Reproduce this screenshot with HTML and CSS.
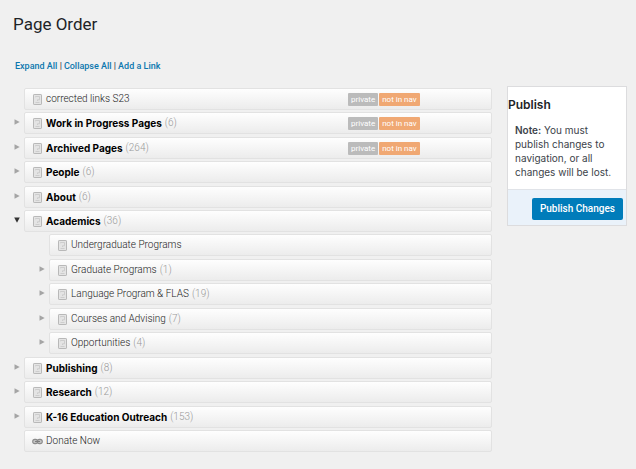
FILE: index.html
```html
<!DOCTYPE html>
<html lang="en">

<head>
    <meta charset="UTF-8">
    <meta name="viewport" content="width=device-width, initial-scale=1.0">
    <title>Page Order</title>
    <link rel="stylesheet" href="styles.css">
</head>

<body>
    <!-- shared icons -->
    <svg class="sprite" aria-hidden="true">
        <symbol id="icon-page" viewBox="0 0 9 11">
            <rect x="0.5" y="0.5" width="8" height="10" rx="0.6" fill="#e4e4e4" stroke="#b8b8b8" />
            <path d="M2.5 3.3V2.5h4v3.3H4.5v1.2M2.5 8.5h4" fill="none" stroke="#cacaca" stroke-width="0.9" />
        </symbol>
        <symbol id="icon-link" viewBox="0 0 11 6">
            <rect x="0.7" y="0.9" width="5" height="4.2" rx="2.1" fill="#c4c4c4" stroke="#8c8c8c" stroke-width="1.1" />
            <rect x="5.3" y="0.9" width="5" height="4.2" rx="2.1" fill="#c4c4c4" stroke="#8c8c8c" stroke-width="1.1" />
            <path d="M3 3h5" stroke="#7c7c7c" stroke-width="1.1" />
        </symbol>
        <symbol id="icon-closed" viewBox="0 0 6 6">
            <path d="M0.5 0.3L5.7 3L0.5 5.7z" fill="#a5a5a5" />
        </symbol>
        <symbol id="icon-open" viewBox="0 0 6 6">
            <path d="M0.2 0.5H5.8L3 5.8z" fill="#333" />
        </symbol>
    </svg>

    <main class="page">
        <h1>Page Order</h1>

        <nav class="links">
            <a href="#">Expand All</a> |<a href="#">Collapse All</a> |<a href="#">Add a Link</a>
        </nav>

        <div class="columns">
            <ul class="tree">
                <li>
                    <div class="row">
                        <span class="name"><svg class="icon"><use href="#icon-page" /></svg>corrected links S23</span>
                        <span class="badges"><span class="badge private">private</span><span class="badge hidden-nav">not in nav</span></span>
                    </div>
                </li>
                <li>
                    <button class="toggle" aria-label="Expand Work in Progress Pages"><svg><use href="#icon-closed" /></svg></button>
                    <div class="row">
                        <span class="name"><svg class="icon"><use href="#icon-page" /></svg><strong>Work in Progress Pages</strong><span class="count">(6)</span></span>
                        <span class="badges"><span class="badge private">private</span><span class="badge hidden-nav">not in nav</span></span>
                    </div>
                </li>
                <li>
                    <button class="toggle" aria-label="Expand Archived Pages"><svg><use href="#icon-closed" /></svg></button>
                    <div class="row">
                        <span class="name"><svg class="icon"><use href="#icon-page" /></svg><strong>Archived Pages</strong><span class="count">(264)</span></span>
                        <span class="badges"><span class="badge private">private</span><span class="badge hidden-nav">not in nav</span></span>
                    </div>
                </li>
                <li>
                    <button class="toggle" aria-label="Expand People"><svg><use href="#icon-closed" /></svg></button>
                    <div class="row">
                        <span class="name"><svg class="icon"><use href="#icon-page" /></svg><strong>People</strong><span class="count">(6)</span></span>
                    </div>
                </li>
                <li>
                    <button class="toggle" aria-label="Expand About"><svg><use href="#icon-closed" /></svg></button>
                    <div class="row">
                        <span class="name"><svg class="icon"><use href="#icon-page" /></svg><strong>About</strong><span class="count">(6)</span></span>
                    </div>
                </li>
                <li>
                    <button class="toggle" aria-label="Collapse Academics" aria-expanded="true"><svg><use href="#icon-open" /></svg></button>
                    <div class="row">
                        <span class="name"><svg class="icon"><use href="#icon-page" /></svg><strong>Academics</strong><span class="count">(36)</span></span>
                    </div>
                    <ul class="subtree">
                        <li>
                            <div class="row">
                                <span class="name"><svg class="icon"><use href="#icon-page" /></svg>Undergraduate Programs</span>
                            </div>
                        </li>
                        <li>
                            <button class="toggle" aria-label="Expand Graduate Programs"><svg><use href="#icon-closed" /></svg></button>
                            <div class="row">
                                <span class="name"><svg class="icon"><use href="#icon-page" /></svg>Graduate Programs<span class="count">(1)</span></span>
                            </div>
                        </li>
                        <li>
                            <button class="toggle" aria-label="Expand Language Program &amp; FLAS"><svg><use href="#icon-closed" /></svg></button>
                            <div class="row">
                                <span class="name"><svg class="icon"><use href="#icon-page" /></svg>Language Program &amp; FLAS<span class="count">(19)</span></span>
                            </div>
                        </li>
                        <li>
                            <button class="toggle" aria-label="Expand Courses and Advising"><svg><use href="#icon-closed" /></svg></button>
                            <div class="row">
                                <span class="name"><svg class="icon"><use href="#icon-page" /></svg>Courses and Advising<span class="count">(7)</span></span>
                            </div>
                        </li>
                        <li>
                            <button class="toggle" aria-label="Expand Opportunities"><svg><use href="#icon-closed" /></svg></button>
                            <div class="row">
                                <span class="name"><svg class="icon"><use href="#icon-page" /></svg>Opportunities<span class="count">(4)</span></span>
                            </div>
                        </li>
                    </ul>
                </li>
                <li>
                    <button class="toggle" aria-label="Expand Publishing"><svg><use href="#icon-closed" /></svg></button>
                    <div class="row">
                        <span class="name"><svg class="icon"><use href="#icon-page" /></svg><strong>Publishing</strong><span class="count">(8)</span></span>
                    </div>
                </li>
                <li>
                    <button class="toggle" aria-label="Expand Research"><svg><use href="#icon-closed" /></svg></button>
                    <div class="row">
                        <span class="name"><svg class="icon"><use href="#icon-page" /></svg><strong>Research</strong><span class="count">(12)</span></span>
                    </div>
                </li>
                <li>
                    <button class="toggle" aria-label="Expand K-16 Education Outreach"><svg><use href="#icon-closed" /></svg></button>
                    <div class="row">
                        <span class="name"><svg class="icon"><use href="#icon-page" /></svg><strong>K-16 Education Outreach</strong><span class="count">(153)</span></span>
                    </div>
                </li>
                <li>
                    <div class="row">
                        <span class="name"><svg class="icon"><use href="#icon-link" /></svg>Donate Now</span>
                    </div>
                </li>
            </ul>

            <aside class="publish">
                <h2>Publish</h2>
                <p><strong>Note:</strong> You must publish changes to navigation, or all changes will be lost.</p>
                <div class="publish-actions">
                    <button class="publish-button">Publish Changes</button>
                </div>
            </aside>
        </div>
    </main>
</body>

</html>
```
FILE: styles.css
```css
*,
*::before,
*::after {
    box-sizing: border-box;
    margin: 0;
    padding: 0;
}

body {
    background: #f0f0f0;
    color: #3c434a;
    font-family: Inter, 'Liberation Sans', sans-serif;
    font-size: 10px;
    line-height: 14px;
}

ul {
    list-style: none;
}

.sprite {
    display: none;
}

.page {
    padding: 12px 9px 16px 13px;
}

h1 {
    color: #1d2327;
    font-family: Roboto, sans-serif;
    font-size: 17px;
    font-weight: 400;
    line-height: 24px;
}

.links {
    font-family: Roboto, sans-serif;
    font-size: 9px;
    font-weight: 500;
    margin: 23px 0 13px 2px;
}

.links a {
    color: #0b77ae;
    text-decoration: none;
}

.links a + a {
    margin-left: 2px;
}

.columns {
    align-items: flex-start;
    display: flex;
    gap: 15px;
}

.tree {
    flex: 1;
    padding: 2px 0 0 11px;
}

.tree li {
    margin-top: 2px;
    position: relative;
}

.tree > li:first-child {
    margin-top: 0;
}

.tree > li:nth-child(odd):not(:first-child),
.subtree > li:nth-child(even) {
    margin-top: 3px;
}

.subtree {
    margin-left: 25px;
}

.toggle {
    align-items: center;
    background: none;
    border: 0;
    cursor: pointer;
    display: flex;
    height: 20px;
    justify-content: center;
    left: -13px;
    position: absolute;
    top: 0;
    width: 12px;
}

.toggle svg {
    height: 6px;
    width: 6px;
}

.row {
    align-items: center;
    background: linear-gradient(#fefefe, #ececec);
    border: 1px solid #e2e2e2;
    border-radius: 2px;
    display: flex;
    height: 22px;
    padding-left: 7px;
}

.name {
    align-items: center;
    color: #222;
    display: flex;
    flex: 1;
    font-family: Roboto, sans-serif;
    font-weight: 300;
    line-height: 16px;
}

.name strong {
    color: #000;
    font-family: Inter, sans-serif;
    font-weight: 700;
}

.icon {
    flex: none;
    height: 11px;
    margin-right: 3px;
    width: 11px;
}

.count {
    color: #999;
    margin-left: 3px;
}

.badges {
    display: flex;
    flex: 0 0 143px;
    gap: 1px;
}

.badge {
    border-radius: 1px;
    color: #fff;
    font-family: Roboto, sans-serif;
    font-size: 8px;
    line-height: 13px;
    padding: 0 3px;
}

.private {
    background: #bbb;
}

.hidden-nav {
    background: #f0a873;
}

.publish {
    background: #fff;
    border: 1px solid #dcdcde;
    flex: 0 0 120px;
}

.publish h2 {
    color: #1d2327;
    font-size: 12px;
    font-weight: 600;
    line-height: 16px;
    padding-top: 10px;
}

.publish p {
    padding: 10px 7px;
}

.publish strong {
    font-weight: 600;
}

.publish-actions {
    background: #eaf2fa;
    border-top: 1px solid #e0e3e8;
    display: flex;
    justify-content: flex-end;
    padding: 8px 3px 5px;
}

.publish-button {
    background: #007cba;
    border: 0;
    border-radius: 2px;
    color: #fff;
    font-family: Roboto, sans-serif;
    font-size: 10px;
    font-weight: 500;
    line-height: 22px;
    padding: 0 8px;
    white-space: nowrap;
}
```
